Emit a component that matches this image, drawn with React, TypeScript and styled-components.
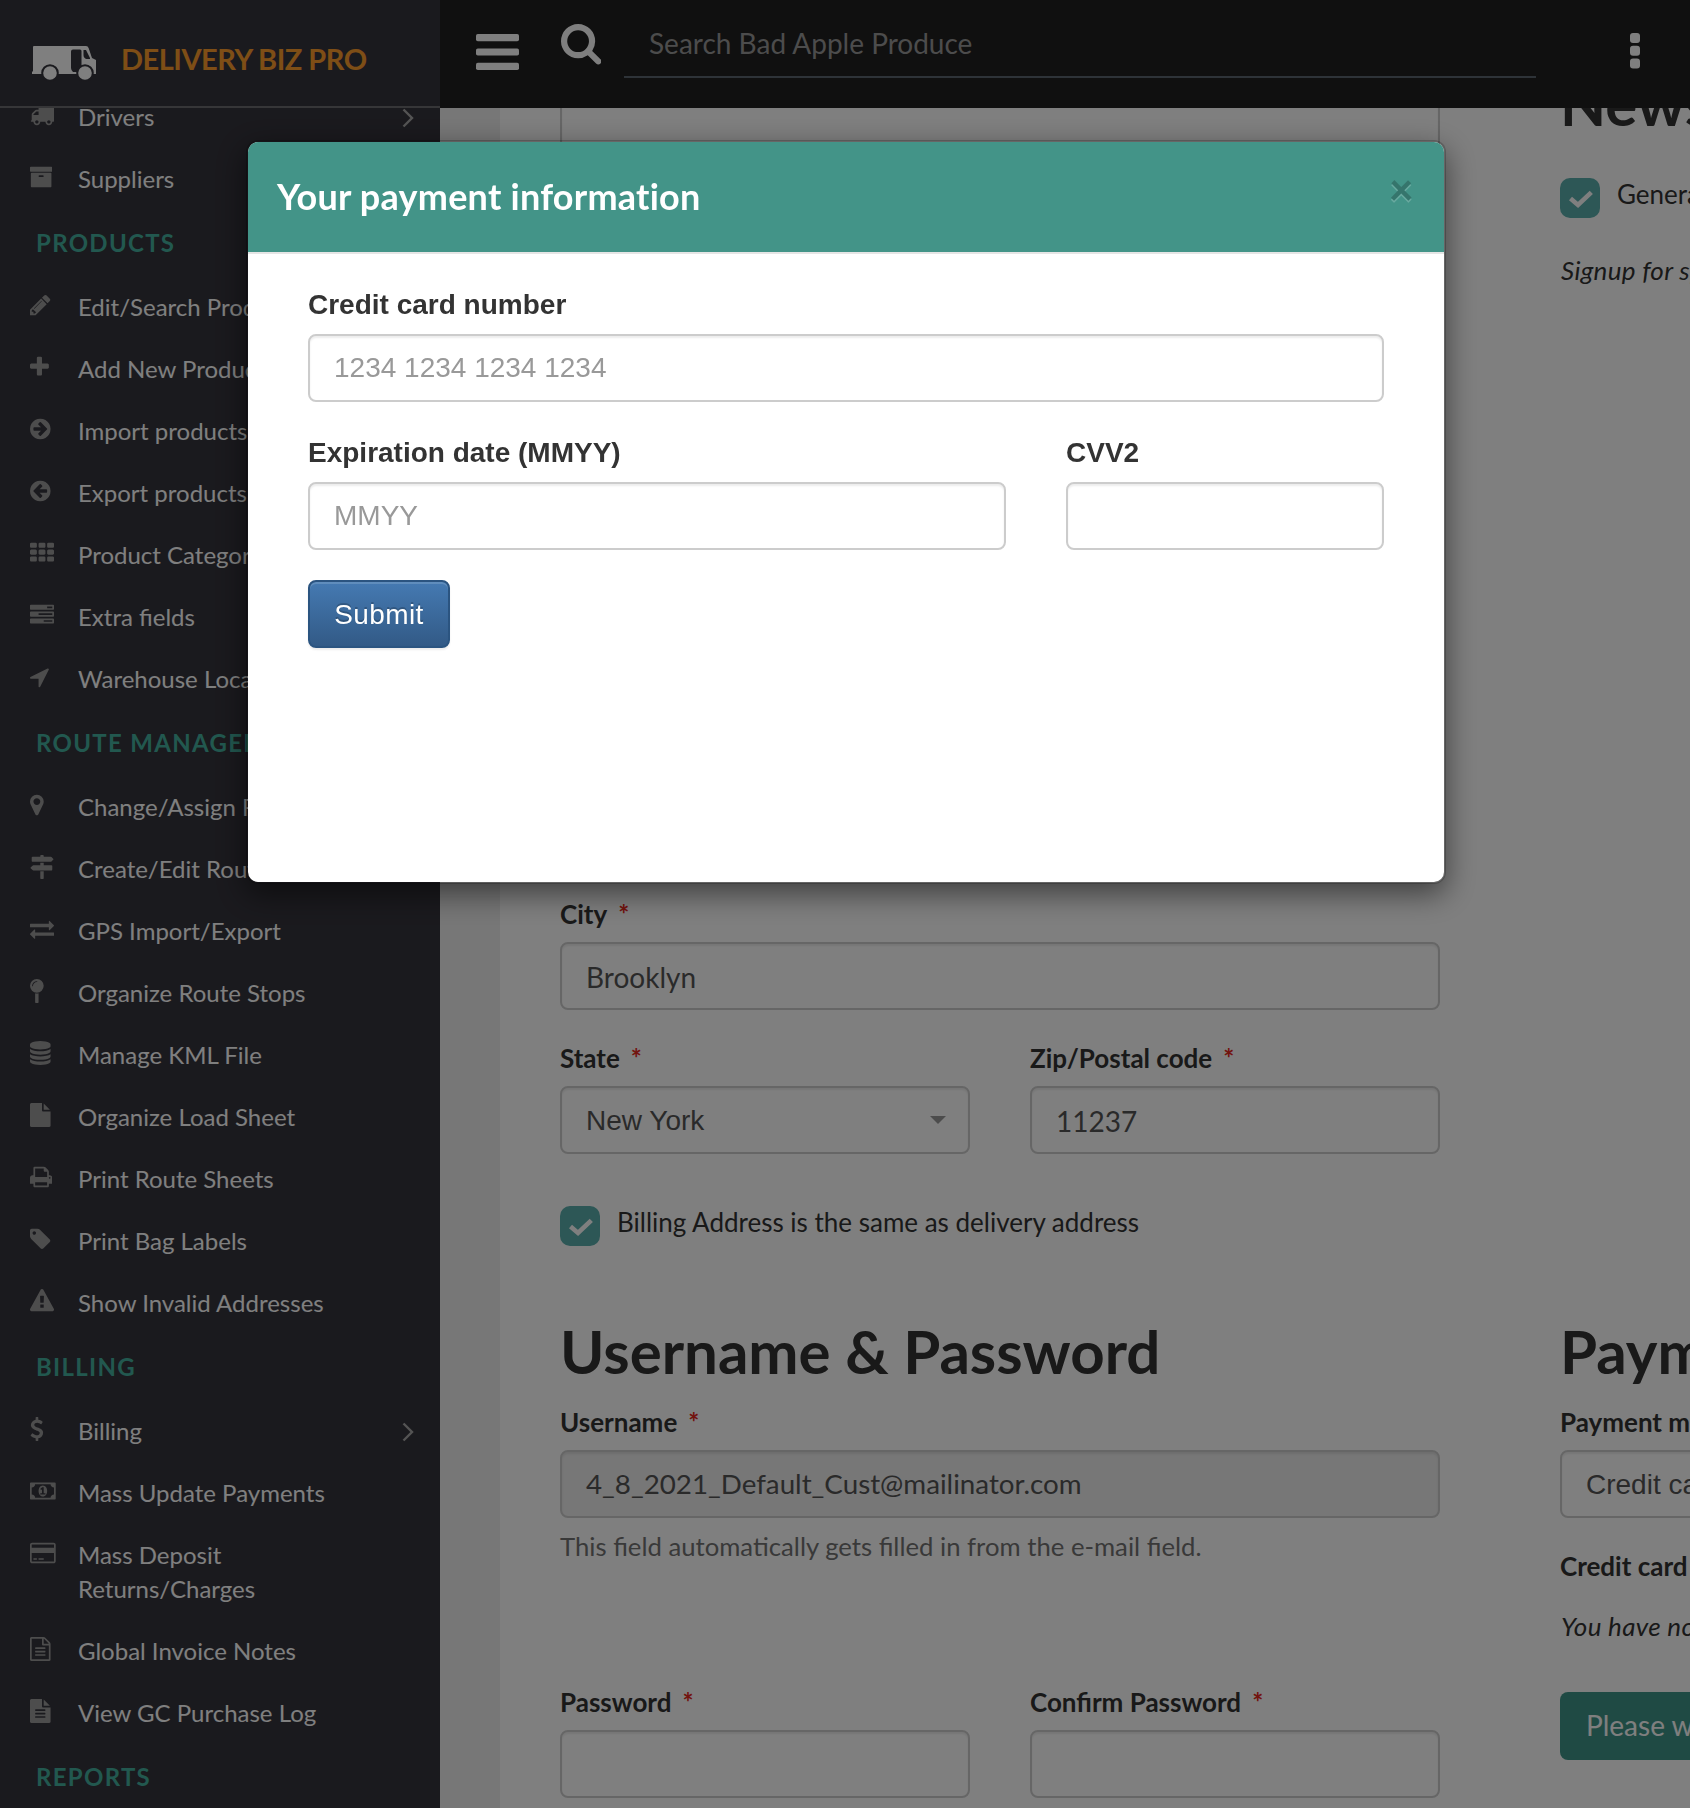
import React from "react";
import styled, { createGlobalStyle, css } from "styled-components";

const lato = `Lato, "Noto Sans", sans-serif`;
const helvetica = `"Liberation Sans", Arial, sans-serif`;
const teal = "#439488";

const GlobalStyle = createGlobalStyle`
  *, *::before, *::after { box-sizing: border-box; }
  html, body { margin: 0; padding: 0; }
  body { font-family: ${lato}; font-size: 26px; line-height: 37px; color: #333; background: #fff; overflow: hidden; }
  h1, h2, p { margin: 0; }
  input, button { font: inherit; }
`;

type IconDef = { x: number; w: number; d: string };

const icons: Record<string, IconDef> = {
  truck: { x: 0, w: 1792, d: "M640 1408q0-52-38-90t-90-38-90 38-38 90 38 90 90 38 90-38 38-90zm-384-512h384v-256h-158q-13 0-22 9l-195 195q-9 9-9 22v30zm1280 512q0-52-38-90t-90-38-90 38-38 90 38 90 90 38 90-38 38-90zm256-1088v1024q0 15-4 26.5t-13.5 18.5-16.5 11.5-23.5 6-22.5 2-25.5 0-22.5-.5q0 106-75 181t-181 75-181-75-75-181h-384q0 106-75 181t-181 75-181-75-75-181h-64q-3 0-22.5.5t-25.5 0-22.5-2-23.5-6-16.5-11.5-13.5-18.5-4-26.5q0-26 19-45t45-19v-320q0-8-.5-35t0-38 2.5-34.5 6.5-37 14-30.5 22.5-30l198-198q19-19 50.5-32t58.5-13h160v-192q0-26 19-45t45-19h1024q26 0 45 19t19 45z" },
  archive: { x: 64, w: 1664, d: "M1088 832q0-26-19-45t-45-19h-256q-26 0-45 19t-19 45 19 45 45 19h256q26 0 45-19t19-45zm576-192v960q0 26-19 45t-45 19h-1408q-26 0-45-19t-19-45v-960q0-26 19-45t45-19h1408q26 0 45 19t19 45zm64-448v256q0 26-19 45t-45 19h-1536q-26 0-45-19t-19-45v-256q0-26 19-45t45-19h1536q26 0 45 19t19 45z" },
  pencil: { x: 128, w: 1536, d: "M491 1536l91-91-235-235-91 91v107h128v128h107zm523-928q0-22-22-22-10 0-17 7l-542 542q-7 7-7 17 0 22 22 22 10 0 17-7l542-542q7-7 7-17zm-54-192l416 416-832 832h-416v-416zm683 96q0 53-37 90l-166 166-416-416 166-165q36-38 90-38 53 0 91 38l235 234q37 39 37 91z" },
  plus: { x: 192, w: 1408, d: "M1600 736v192q0 40-28 68t-68 28h-416v416q0 40-28 68t-68 28h-192q-40 0-68-28t-28-68v-416h-416q-40 0-68-28t-28-68v-192q0-40 28-68t68-28h416v-416q0-40 28-68t68-28h192q40 0 68 28t28 68v416h416q40 0 68 28t28 68z" },
  arrowRight: { x: 128, w: 1536, d: "M1413 896q0-27-18-45l-91-91-362-362q-18-18-45-18t-45 18l-91 91q-18 18-18 45t18 45l189 189h-502q-26 0-45 19t-19 45v128q0 26 19 45t45 19h502l-189 189q-19 19-19 45t19 45l91 91q18 18 45 18t45-18l362-362 91-91q18-18 18-45zm251 0q0 209-103 385.5t-279.5 279.5-385.5 103-385.5-103-279.5-279.5-103-385.5 103-385.5 279.5-279.5 385.5-103 385.5 103 279.5 279.5 103 385.5z" },
  th: { x: 0, w: 1792, d: [128, 640, 1152].flatMap((y) => [0, 640, 1280].map((x) => `M${x + 96} ${y}h320q40 0 68 28t28 68v192q0 40-28 68t-68 28h-320q-40 0-68-28t-28-68v-192q0-40 28-68t68-28z`)).join("") },
  tasks: { x: 0, w: 1792, d: "M1024 1408h640v-128h-640v128zm-384-512h1024v-128h-1024v128zm640-512h384v-128h-384v128zm512 832v256q0 26-19 45t-45 19h-1664q-26 0-45-19t-19-45v-256q0-26 19-45t45-19h1664q26 0 45 19t19 45zm0-512v256q0 26-19 45t-45 19h-1664q-26 0-45-19t-19-45v-256q0-26 19-45t45-19h1664q26 0 45 19t19 45zm0-512v256q0 26-19 45t-45 19h-1664q-26 0-45-19t-19-45v-256q0-26 19-45t45-19h1664q26 0 45 19t19 45z" },
  location: { x: 192, w: 1408, d: "M1593 349l-640 1280q-17 35-57 35-5 0-15-2-22-5-35.5-22.5t-13.5-39.5v-576h-576q-22 0-39.5-13.5t-22.5-35.5 4-42 29-30l1280-640q13-7 29-7 27 0 45 19 15 14 18.5 34.5t-6.5 39.5z" },
  marker: { x: 384, w: 1024, d: "M1152 640q0-106-75-181t-181-75-181 75-75 181 75 181 181 75 181-75 75-181zm256 0q0 109-33 179l-364 774q-16 33-47.5 52t-67.5 19-67.5-19-46.5-52l-365-774q-33-70-33-179 0-212 150-362t362-150 362 150 150 362z" },
  signs: { x: 0, w: 1792, d: "M1745 297q10 10 10 23t-10 23l-141 141q-28 28-68 28h-1344q-26 0-45-19t-19-45v-256q0-26 19-45t45-19h576v-64q0-26 19-45t45-19h128q26 0 45 19t19 45v64h512q40 0 68 28zm-977 919h256v512q0 26-19 45t-45 19h-128q-26 0-45-19t-19-45v-512zm832-448q26 0 45 19t19 45v256q0 26-19 45t-45 19h-1344q-40 0-68-28l-141-141q-10-10-10-23t10-23l141-141q28-28 68-28h512v-192h256v192h576z" },
  exchange: { x: 0, w: 1792, d: "M1792 1184v192q0 13-9.5 22.5t-22.5 9.5h-1376v192q0 13-9.5 22.5t-22.5 9.5q-12 0-24-10l-319-320q-9-9-9-22 0-14 9-23l320-320q9-9 23-9 13 0 22.5 9.5t9.5 22.5v192h1376q13 0 22.5 9.5t9.5 22.5zm0-544q0 14-9 23l-320 320q-9 9-23 9-13 0-22.5-9.5t-9.5-22.5v-192h-1376q-13 0-22.5-9.5t-9.5-22.5v-192q0-13 9.5-22.5t22.5-9.5h1376v-192q0-14 9-23t23-9q12 0 24 10l319 319q9 9 9 23z" },
  pin: { x: 384, w: 1024, d: "M896 1088q66 0 128-15v655q0 26-19 45t-45 19h-128q-26 0-45-19t-19-45v-655q62 15 128 15zm0-1088q212 0 362 150t150 362-150 362-362 150-362-150-150-362 150-362 362-150zm0 224q14 0 23-9t9-23-9-23-23-9q-146 0-249 103t-103 249q0 14 9 23t23 9 23-9 9-23q0-119 84.5-203.5t203.5-84.5z" },
  database: { x: 128, w: 1536, d: "M896 768q237 0 443-43t325-127v170q0 69-103 128t-280 93.5-385 34.5-385-34.5-280-93.5-103-128v-170q119 84 325 127t443 43zm0 768q237 0 443-43t325-127v170q0 69-103 128t-280 93.5-385 34.5-385-34.5-280-93.5-103-128v-170q119 84 325 127t443 43zm0-384q237 0 443-43t325-127v170q0 69-103 128t-280 93.5-385 34.5-385-34.5-280-93.5-103-128v-170q119 84 325 127t443 43zm0-1152q208 0 385 34.5t280 93.5 103 128v128q0 69-103 128t-280 93.5-385 34.5-385-34.5-280-93.5-103-128v-128q0-69 103-128t280-93.5 385-34.5z" },
  file: { x: 128, w: 1536, d: "M1152 512v-472q22 14 36 28l408 408q14 14 28 36h-472zm-128 32q0 40 28 68t68 28h544v1056q0 40-28 68t-68 28h-1344q-40 0-68-28t-28-68v-1600q0-40 28-68t68-28h800v544z" },
  fileText: { x: 128, w: 1536, d: "M1152 512v-472q22 14 36 28l408 408q14 14 28 36h-472zm-128 32q0 40 28 68t68 28h544v1056q0 40-28 68t-68 28h-1344q-40 0-68-28t-28-68v-1600q0-40 28-68t68-28h800v544zM544 768h704q32 0 32 32v64q0 32-32 32h-704q-32 0-32-32v-64q0-32 32-32zM544 1024h704q32 0 32 32v64q0 32-32 32h-704q-32 0-32-32v-64q0-32 32-32zM544 1280h704q32 0 32 32v64q0 32-32 32h-704q-32 0-32-32v-64q0-32 32-32z" },
  fileTextO: { x: 128, w: 1536, d: "M1596 380q28 28 48 76t20 88v1152q0 40-28 68t-68 28h-1344q-40 0-68-28t-28-68v-1600q0-40 28-68t68-28h896q40 0 88 20t76 48zm-444-244v376h376q-10-29-22-41l-313-313q-12-12-41-22zm384 1528v-1024h-416q-40 0-68-28t-28-68v-416h-768v1536h1280zm-1024-864q0-14 9-23t23-9h704q14 0 23 9t9 23v64q0 14-9 23t-23 9h-704q-14 0-23-9t-9-23v-64zm736 224q14 0 23 9t9 23v64q0 14-9 23t-23 9h-704q-14 0-23-9t-9-23v-64q0-14 9-23t23-9h704zm0 256q14 0 23 9t9 23v64q0 14-9 23t-23 9h-704q-14 0-23-9t-9-23v-64q0-14 9-23t23-9h704z" },
  print: { x: 64, w: 1664, d: "M448 1536h896v-256h-896v256zm0-640h896v-384h-160q-40 0-68-28t-28-68v-160h-640v640zm1152 64q0-26-19-45t-45-19-45 19-19 45 19 45 45 19 45-19 19-45zm128 0v416q0 13-9.5 22.5t-22.5 9.5h-224v160q0 40-28 68t-68 28h-960q-40 0-68-28t-28-68v-160h-224q-13 0-22.5-9.5t-9.5-22.5v-416q0-79 56.5-135.5t135.5-56.5h64v-544q0-40 28-68t68-28h672q40 0 88 20t76 48l152 152q28 28 48 76t20 88v256h64q79 0 135.5 56.5t56.5 135.5z" },
  tag: { x: 128, w: 1536, d: "M576 448q0-53-37.5-90.5t-90.5-37.5-90.5 37.5-37.5 90.5 37.5 90.5 90.5 37.5 90.5-37.5 37.5-90.5zm1067 576q0 53-37 90l-491 492q-39 37-91 37-53 0-90-37l-715-716q-38-37-64.5-101t-26.5-117v-416q0-52 38-90t90-38h416q53 0 117 26.5t102 64.5l715 714q37 39 37 91z" },
  warning: { x: 0, w: 1792, d: "M1024 1375v-190q0-14-9.5-23.5t-22.5-9.5h-192q-13 0-22.5 9.5t-9.5 23.5v190q0 14 9.5 23.5t22.5 9.5h192q13 0 22.5-9.5t9.5-23.5zm-2-374l18-459q0-12-10-19-13-11-24-11h-220q-11 0-24 11-10 7-10 21l17 457q0 10 10 16.5t24 6.5h185q14 0 23.5-6.5t10.5-16.5zm-14-934l768 1408q35 63-2 126-17 29-46.5 46t-63.5 17h-1536q-34 0-63.5-17t-46.5-46q-37-63-2-126l768-1408q17-31 47-49t65-18 65 18 47 49z" },
  usd: { x: 384, w: 1024, d: "M1362 1185q0 153-99.5 263.5t-258.5 136.5v175q0 14-9 23t-23 9h-135q-13 0-22.5-9.5t-9.5-22.5v-175q-66-9-127.5-31t-101.5-44.5-74-48-46.5-37.5-17.5-18q-17-21-2-41l103-135q7-10 23-12 15-2 24 9l2 2q113 99 243 125 37 8 74 8 81 0 142.5-43t61.5-122q0-28-15-53t-33.5-42-58.5-37.5-66-32-80-32.5q-39-16-61.5-25t-61.5-26.5-62.5-31-56.5-35.5-53.5-42.5-43.5-49-35.5-58-21-66.5-8.5-78q0-138 98-242t255-134v-180q0-13 9.5-22.5t22.5-9.5h135q14 0 23 9t9 23v176q57 6 110.5 23t87 33.5 63.5 37.5 39 29 15 14q17 18 5 38l-81 146q-8 15-23 16-14 3-27-7-3-3-14.5-12t-39-26.5-58.5-32-74.5-26-85.5-11.5q-95 0-155 43t-60 111q0 26 8.5 48t29.5 41.5 39.5 33 56 31 60.5 27 70 27.5q53 20 81 31.5t76 35 75.5 42.5 62 50 53 63.5 31.5 76.5 13 94z" },
  money: { x: 0, w: 1920, d: "M768 1152h384v-96h-128v-448h-114l-148 137 77 80q42-37 55-57h2v288h-128v96zm512-256q0 70-21 142t-59.5 134-101.5 101-138 39-138-39-101.5-101-59.5-134-21-142 21-142 59.5-134 101.5-101 138-39 138 39 101.5 101 59.5 134 21 142zm512 256v-512q-106 0-181-75t-75-181h-1152q0 106-75 181t-181 75v512q106 0 181 75t75 181h1152q0-106 75-181t181-75zm128-832v1152q0 26-19 45t-45 19h-1792q-26 0-45-19t-19-45v-1152q0-26 19-45t45-19h1792q26 0 45 19t19 45z" },
  card: { x: 0, w: 1920, d: "M1760 128q66 0 113 47t47 113v1216q0 66-47 113t-113 47h-1600q-66 0-113-47t-47-113v-1216q0-66 47-113t113-47h1600zm-1600 128q-13 0-22.5 9.5t-9.5 22.5v224h1664v-224q0-13-9.5-22.5t-22.5-9.5h-1600zm1600 1280q13 0 22.5-9.5t9.5-22.5v-608h-1664v608q0 13 9.5 22.5t22.5 9.5h1600zm-1504-128v-128h256v128h-256zm384 0v-128h384v128h-384z" },
  search: { x: 64, w: 1664, d: "M1216 832q0-185-131.5-316.5t-316.5-131.5-316.5 131.5-131.5 316.5 131.5 316.5 316.5 131.5 316.5-131.5 131.5-316.5zm512 832q0 52-38 90t-90 38q-54 0-90-38l-343-342q-179 124-399 124-143 0-273.5-55.5t-225-150-150-225-55.5-273.5 55.5-273.5 150-225 225-150 273.5-55.5 273.5 55.5 225 150 150 225 55.5 273.5q0 220-124 399l343 343q37 37 37 90z" },
};

function Icon({ name, size, flip }: { name: string; size: number; flip?: boolean }) {
  const { x, w, d } = icons[name];
  return (
    <svg width={(size * w) / 1792} height={size} viewBox={`${x} 0 ${w} 1792`} fill="currentColor" fillRule="evenodd" aria-hidden>
      <path d={d} transform={flip ? "translate(1792 0) scale(-1 1)" : undefined} />
    </svg>
  );
}

const Shell = styled.div`
  display: grid;
  grid-template-columns: 440px 1fr;
  width: 1690px;
  height: 1808px;
  overflow: hidden;
`;

const Sidebar = styled.aside`
  display: flex;
  flex-direction: column;
  min-height: 0;
  background: #35343c;
`;

const Brand = styled.div`
  display: flex;
  align-items: center;
  flex: none;
  gap: 24px;
  height: 108px;
  padding: 20px 0 0 31px;
  border-bottom: 2px solid #6c6c70;
  color: #fc9d2c;
  font-size: 29px;
  font-weight: 700;
  letter-spacing: -0.5px;
  white-space: nowrap;
`;

const BrandName = styled.span`
  margin-top: -9px;
`;

const Nav = styled.nav`
  flex: 1;
  min-height: 0;
  overflow: hidden;
`;

const NavList = styled.div`
  margin-top: -22px;
`;

const NavSection = styled.h2`
  height: 66px;
  padding-left: 36px;
  color: #44b09f;
  font-size: 24px;
  font-weight: 700;
  line-height: 66px;
  letter-spacing: 1.3px;
  white-space: nowrap;
`;

const NavRow = styled.a`
  display: grid;
  grid-template-columns: 48px 300px 1fr;
  padding: 14px 26px 14px 30px;
  color: #fff;
  font-size: 24px;
  line-height: 34px;
`;

const NavIcon = styled.span`
  height: 24px;
  padding-top: 3px;
  color: #9b9b9b;
  line-height: 0;
`;

const NavText = styled.span`
  white-space: pre-line;
`;

const NavArrow = styled.span`
  display: flex;
  align-items: center;
  justify-content: flex-end;
  padding-top: 2px;
  color: #a8a8a8;
`;

const Main = styled.div`
  display: flex;
  flex-direction: column;
  min-width: 0;
  min-height: 0;
  background: #eee;
`;

const TopBar = styled.header`
  display: flex;
  align-items: flex-start;
  flex: none;
  height: 108px;
  padding-left: 36px;
  background: #202020;
  color: #fff;
`;

const BarButton = styled.span<{ $top: number; $width: number }>`
  flex: none;
  width: ${(p) => p.$width}px;
  padding-top: ${(p) => p.$top}px;
  line-height: 0;
`;

const SearchBox = styled.div`
  width: 912px;
  height: 78px;
  padding: 23px 24px 0 25px;
  border-bottom: 2px solid #5c6670;
  color: #999;
  font-size: 28px;
  line-height: 40px;
`;

const Page = styled.main`
  flex: 1;
  min-height: 0;
  margin-left: 60px;
  padding-left: 60px;
  background: #fff;
  overflow: hidden;
`;

const FormRow = styled.div<{ $height?: number }>`
  display: grid;
  grid-template-columns: 880px 880px;
  column-gap: 120px;
  height: ${(p) => (p.$height ? `${p.$height}px` : "auto")};
`;

const Column = styled.section<{ $offset?: number; $end?: boolean }>`
  display: flex;
  flex-direction: column;
  justify-content: ${(p) => (p.$end ? "space-between" : "flex-start")};
  align-items: stretch;
  margin-top: ${(p) => p.$offset ?? 0}px;
  white-space: nowrap;
`;

const Heading = styled.h1<{ $gap: number }>`
  margin-bottom: ${(p) => p.$gap}px;
  font-size: 60px;
  font-weight: 700;
  line-height: 66px;
`;

const Pair = styled.div`
  display: grid;
  grid-template-columns: 1fr 1fr;
  column-gap: 60px;
`;

const Group = styled.div`
  margin-bottom: 30px;
`;

const FieldLabel = styled.label`
  display: block;
  height: 46px;
  font-weight: 700;
  line-height: 37px;
`;

const Required = styled.span`
  margin-left: 11px;
  color: #e6281c;
`;

const Control = styled.div<{ $disabled?: boolean; $native?: boolean; $height?: number }>`
  display: flex;
  align-items: center;
  justify-content: space-between;
  height: ${(p) => p.$height ?? 68}px;
  padding: 2px 24px 0;
  border: 2px solid #ccc;
  border-radius: 8px;
  background: #fff;
  box-shadow: inset 0 2px 2px rgba(0, 0, 0, 0.075);
  color: #555;
  font-size: 28px;
  ${(p) => p.$disabled && css`
    padding-top: 0;
    padding-bottom: 2px;
    background: #eee;
    font-size: 27.75px;
  `}
  ${(p) => p.$native && css`
    padding-top: 0;
    font-family: ${helvetica};
  `}
`;

const Caret = styled.span`
  margin-right: -2px;
  border: solid transparent;
  border-width: 8px 8px 0;
  border-top-color: #999;
`;

const Help = styled.p`
  margin: -20px 0 119px;
  color: #737373;
  font-size: 25.7px;
`;

const CheckRow = styled.label<{ $above?: number; $below: number }>`
  display: flex;
  align-items: flex-start;
  gap: 17px;
  margin: ${(p) => p.$above ?? 0}px 0 ${(p) => p.$below}px;
  line-height: 32px;
`;

const CheckBox = styled.span`
  width: 40px;
  height: 40px;
  border-radius: 10px;
  background: #5aaeac;
  line-height: 0;
`;

const Note = styled.p<{ $top: number; $bottom: number }>`
  margin: ${(p) => p.$top}px 0 ${(p) => p.$bottom}px;
  padding-left: 1px;
  font-style: italic;
  letter-spacing: 0.3px;
`;

const WaitButton = styled.button`
  align-self: flex-start;
  height: 68px;
  padding: 0 26px 2px;
  border: 0;
  border-radius: 8px;
  background: #3f9588;
  color: #fff;
  font-size: 28px;
`;

const Backdrop = styled.div`
  position: fixed;
  inset: 0;
  display: flex;
  align-items: flex-start;
  padding: 140px 0 0 246px;
  background: rgba(0, 0, 0, 0.5);
`;

const Dialog = styled.div`
  width: 1200px;
  height: 744px;
  border: 2px solid rgba(0, 0, 0, 0.2);
  border-radius: 12px;
  background: #fff;
  background-clip: padding-box;
  box-shadow: 0 10px 30px rgba(0, 0, 0, 0.5);
`;

const DialogHeader = styled.div`
  display: flex;
  align-items: flex-start;
  justify-content: space-between;
  height: 112px;
  padding: 29px 30px 0 29px;
  border-bottom: 2px solid #e5e5e5;
  border-radius: 10px 10px 0 0;
  background: ${teal};
  background-clip: padding-box;
  color: #fff;
  font-size: 36px;
  font-weight: 700;
  line-height: 50px;
  letter-spacing: 0.24px;
`;

const Close = styled.span`
  margin-top: -3px;
  color: #000;
  font-size: 43px;
  font-weight: 900;
  line-height: 42px;
  text-shadow: 0 2px 0 #fff;
  opacity: 0.2;
`;

const DialogBody = styled.form`
  display: grid;
  grid-template-columns: 698px 318px;
  column-gap: 60px;
  row-gap: 30px;
  padding: 30px 60px;
  font-family: ${helvetica};
  font-size: 28px;
`;

const DialogField = styled.label<{ $wide?: boolean }>`
  display: flex;
  flex-direction: column;
  gap: 9px;
  grid-column: ${(p) => (p.$wide ? "1 / -1" : "auto")};
  padding-top: 1px;
  font-weight: 700;
  line-height: 40px;
`;

const DialogInput = styled.input`
  width: 100%;
  height: 68px;
  padding: 12px 24px;
  border: 2px solid #ccc;
  border-radius: 8px;
  background: #fff;
  box-shadow: inset 0 2px 2px rgba(0, 0, 0, 0.075);
  color: #555;
  font-weight: 400;
  &::placeholder { color: #999; opacity: 1; }
`;

const Submit = styled.button`
  justify-self: start;
  width: 142px;
  height: 68px;
  padding: 0;
  border: 2px solid #2b5480;
  border-radius: 8px;
  background: linear-gradient(to bottom, #457ab2 0%, #325a86 100%);
  box-shadow: inset 0 2px 0 rgba(255, 255, 255, 0.15), 0 2px 2px rgba(0, 0, 0, 0.075);
  color: #fff;
  letter-spacing: 0.4px;
  text-shadow: 0 -2px 0 rgba(0, 0, 0, 0.2);
`;

type NavItem = { label: string; icon?: string; flip?: boolean; more?: boolean; section?: boolean };

const navItems: NavItem[] = [
  { label: "Drivers", icon: "truck", more: true },
  { label: "Suppliers", icon: "archive" },
  { label: "PRODUCTS", section: true },
  { label: "Edit/Search Products", icon: "pencil" },
  { label: "Add New Product", icon: "plus" },
  { label: "Import products", icon: "arrowRight" },
  { label: "Export products", icon: "arrowRight", flip: true },
  { label: "Product Categories", icon: "th" },
  { label: "Extra fields", icon: "tasks" },
  { label: "Warehouse Locations", icon: "location" },
  { label: "ROUTE MANAGEMENT", section: true },
  { label: "Change/Assign Routes", icon: "marker" },
  { label: "Create/Edit Routes", icon: "signs" },
  { label: "GPS Import/Export", icon: "exchange" },
  { label: "Organize Route Stops", icon: "pin" },
  { label: "Manage KML File", icon: "database" },
  { label: "Organize Load Sheet", icon: "file" },
  { label: "Print Route Sheets", icon: "print" },
  { label: "Print Bag Labels", icon: "tag" },
  { label: "Show Invalid Addresses", icon: "warning" },
  { label: "BILLING", section: true },
  { label: "Billing", icon: "usd", more: true },
  { label: "Mass Update Payments", icon: "money" },
  { label: "Mass Deposit\nReturns/Charges", icon: "card" },
  { label: "Global Invoice Notes", icon: "fileTextO" },
  { label: "View GC Purchase Log", icon: "fileText" },
  { label: "REPORTS", section: true },
];

function TruckLogo() {
  return (
    <svg width="66" height="38" viewBox="0 0 66 38" aria-hidden>
      <path fill="#fff" d="M3 2h52q2 0 2.600 2l3.400 10 4 2v14H1v-2l1-1V3q0-1 1-1z" />
      <path fill="#35343c" d="M42 5.500h7q1.500 0 1.500 1.500v15q-3 2-4.500 6h-4q-2-2-2-4V7.500q0-2 2-2zM52.500 6h2.500l4 8v1h-3.500q-3-1-3-4z" />
      <g fill="#fff" stroke="#35343c" strokeWidth="2">
        <circle cx="19" cy="29" r="7.800" />
        <circle cx="54" cy="29" r="7.800" />
      </g>
    </svg>
  );
}

function LabelText({ text, required }: { text: string; required?: boolean }) {
  return (
    <FieldLabel>
      {text}
      {required && <Required>*</Required>}
    </FieldLabel>
  );
}

function CheckMark({ text, above, below }: { text: string; above?: number; below: number }) {
  return (
    <CheckRow $above={above} $below={below}>
      <CheckBox>
        <svg width="40" height="40" viewBox="0 0 40 40" fill="none" stroke="#fff" strokeWidth="4.6" aria-hidden>
          <path d="M10.500 20.500l7.500 6.500L31.300 14.300" />
        </svg>
      </CheckBox>
      {text}
    </CheckRow>
  );
}

export default function App() {
  return (
    <>
      <GlobalStyle />
      <Shell>
        <Sidebar>
          <Brand>
            <TruckLogo />
            <BrandName>DELIVERY BIZ PRO</BrandName>
          </Brand>
          <Nav>
            <NavList>
              {navItems.map((item) =>
                item.section ? (
                  <NavSection key={item.label}>{item.label}</NavSection>
                ) : (
                  <NavRow key={item.label}>
                    <NavIcon><Icon name={item.icon!} size={24} flip={item.flip} /></NavIcon>
                    <NavText>{item.label}</NavText>
                    {item.more && (
                      <NavArrow>
                        <svg width="13" height="20" viewBox="0 0 13 20" fill="none" stroke="currentColor" strokeWidth="2.4" aria-hidden>
                          <path d="M2.500 1.500l8.500 8.500L2.500 18.500" />
                        </svg>
                      </NavArrow>
                    )}
                  </NavRow>
                ),
              )}
            </NavList>
          </Nav>
        </Sidebar>
        <Main>
          <TopBar>
            <BarButton $top={34} $width={85}>
              <svg width="43" height="36" viewBox="0 0 43 36" fill="#fff" aria-hidden>
                <rect y="0" width="43" height="7.2" rx="1.8" />
                <rect y="14.4" width="43" height="7.2" rx="1.8" />
                <rect y="28.8" width="43" height="7.2" rx="1.8" />
              </svg>
            </BarButton>
            <BarButton $top={21} $width={63}><Icon name="search" size={43.5} /></BarButton>
            <SearchBox>Search Bad Apple Produce</SearchBox>
            <BarButton $top={33} $width={104}>
              <svg width="104" height="36" viewBox="0 0 104 36" fill="#fff" aria-hidden>
                <rect x="94" y="0" width="10" height="10" rx="3" />
                <rect x="94" y="12.700" width="10" height="10" rx="3" />
                <rect x="94" y="25.400" width="10" height="10" rx="3" />
              </svg>
            </BarButton>
          </TopBar>
          <Page>
            <FormRow $height={1210}>
              <Column $offset={-60} $end>
                <Control $height={140} />
                <div>
                  <Group>
                    <LabelText text="City" required />
                    <Control>Brooklyn</Control>
                  </Group>
                  <Pair>
                    <Group>
                      <LabelText text="State" required />
                      <Control $native>New York<Caret /></Control>
                    </Group>
                    <Group>
                      <LabelText text="Zip/Postal code" required />
                      <Control>11237</Control>
                    </Group>
                  </Pair>
                  <CheckMark text="Billing Address is the same as delivery address" above={22} below={72} />
                </div>
              </Column>
              <Column $offset={-38}>
                <Heading $gap={42}>Newsletters</Heading>
                <CheckMark text="General" below={34} />
                <Note $top={0} $bottom={0}>Signup for special offers</Note>
              </Column>
            </FormRow>
            <FormRow>
              <Column>
                <Heading $gap={20}>Username &amp; Password</Heading>
                <Group>
                  <LabelText text="Username" required />
                  <Control $disabled>4_8_2021_Default_Cust@mailinator.com</Control>
                </Group>
                <Help>This field automatically gets filled in from the e-mail field.</Help>
                <Pair>
                  <Group>
                    <LabelText text="Password" required />
                    <Control />
                  </Group>
                  <Group>
                    <LabelText text="Confirm Password" required />
                    <Control />
                  </Group>
                </Pair>
              </Column>
              <Column>
                <Heading $gap={20}>Payment</Heading>
                <Group>
                  <LabelText text="Payment method" />
                  <Control $native>Credit card</Control>
                </Group>
                <LabelText text="Credit card" />
                <Note $top={14} $bottom={47}>You have no cards on file</Note>
                <WaitButton type="button">Please wait</WaitButton>
              </Column>
            </FormRow>
          </Page>
        </Main>
      </Shell>
      <Backdrop>
        <Dialog role="dialog">
          <DialogHeader>
            Your payment information
            <Close>×</Close>
          </DialogHeader>
          <DialogBody>
            <DialogField $wide>
              Credit card number
              <DialogInput placeholder="1234 1234 1234 1234" />
            </DialogField>
            <DialogField>
              Expiration date (MMYY)
              <DialogInput placeholder="MMYY" />
            </DialogField>
            <DialogField>
              CVV2
              <DialogInput />
            </DialogField>
            <Submit type="button">Submit</Submit>
          </DialogBody>
        </Dialog>
      </Backdrop>
    </>
  );
}
